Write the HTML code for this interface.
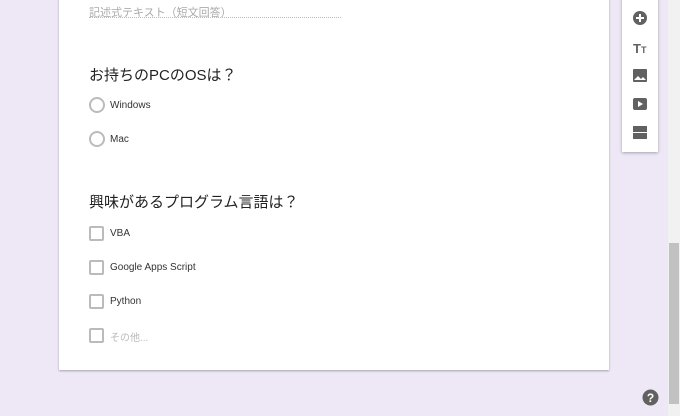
<!DOCTYPE html>
<html><head><meta charset="utf-8"><style>
body{margin:0;width:680px;height:416px;background:#ede7f6;position:relative;overflow:hidden;font-family:"Liberation Sans","Noto Sans CJK JP",sans-serif;}
.card{position:absolute;left:59px;top:-4px;width:550px;height:374px;background:#fff;box-shadow:0 1px 2px rgba(0,0,0,.3);}
.a{position:absolute;}
.ph{left:89px;top:4px;font-size:11px;color:#aaa;}
.ul{left:89px;top:17px;width:252px;border-top:1px dotted #bbb;}
.t{left:89px;font-size:15px;color:#222;}
.r{left:89px;width:12px;height:12px;border:2px solid #bbb;border-radius:50%;}
.c{left:89px;width:11px;height:11px;border:2px solid #bbb;border-radius:2px;}
.l{left:110px;font-size:10px;color:#333;}
.tb{left:622px;top:-4px;width:36px;height:156px;background:#fff;box-shadow:0 1px 3px rgba(0,0,0,.3);}
.sb{left:668px;top:0;width:12px;height:416px;background:#f1f1f1;}
.th{left:669px;top:243px;width:10px;height:161px;background:#c1c1c1;}
</style></head><body>
<div class="card"></div>
<div class="a ph">記述式テキスト（短文回答）</div>
<div class="a ul"></div>
<div class="a t" style="top:64px">お持ちのPCのOSは？</div>
<div class="a r" style="top:97px"></div><div class="a l" style="top:100px">Windows</div>
<div class="a r" style="top:131px"></div><div class="a l" style="top:134px">Mac</div>
<div class="a t" style="top:191px">興味があるプログラム言語は？</div>
<div class="a c" style="top:226px"></div><div class="a l" style="top:228px">VBA</div>
<div class="a c" style="top:260px"></div><div class="a l" style="top:262px">Google Apps Script</div>
<div class="a c" style="top:294px"></div><div class="a l" style="top:296px">Python</div>
<div class="a c" style="top:328px"></div><div class="a l" style="top:329px;color:#bbb">その他...</div>
<div class="a tb"></div>
<svg class="a" style="left:622px;top:0" width="36" height="152">
<circle cx="18" cy="18" r="7" fill="#616161"/><path d="M18 14v8M14 18h8" stroke="#fff" stroke-width="2"/>
<text x="11" y="53" font-family="Liberation Sans" font-weight="bold" font-size="13" fill="#616161">T</text><text x="19" y="53" font-family="Liberation Sans" font-weight="bold" font-size="9" fill="#616161">T</text>
<rect x="11" y="69" width="14" height="13" rx="1" fill="#616161"/><path d="M12 80l4-4 3 3 2-2 3 3z" fill="#fff"/>
<rect x="11" y="98" width="14" height="12" rx="2" fill="#616161"/><path d="M16 101v6l5-3z" fill="#fff"/>
<rect x="11" y="126" width="14" height="6" fill="#616161"/><rect x="11" y="133" width="14" height="6" fill="#616161"/>
</svg>
<div class="a sb"></div><div class="a th"></div>
<svg class="a" style="left:642px;top:389px" width="17" height="17"><circle cx="8.5" cy="8.5" r="8" fill="#616161"/><text x="8.5" y="13" text-anchor="middle" font-family="Liberation Sans" font-weight="bold" font-size="12" fill="#fff">?</text></svg>
</body></html>
